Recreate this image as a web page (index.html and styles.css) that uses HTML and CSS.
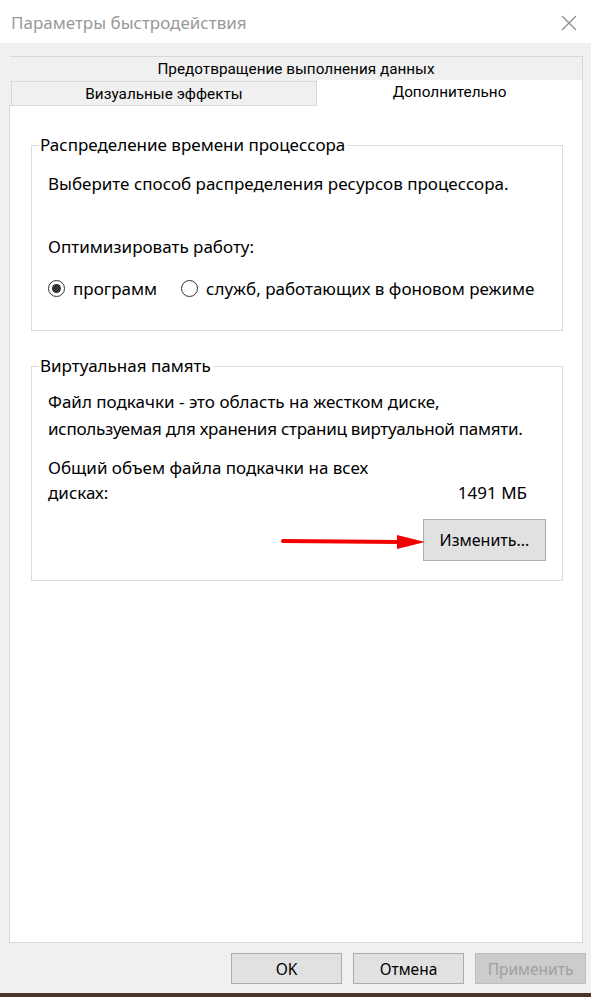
FILE: index.html
```html
<!DOCTYPE html>
<html lang="ru">
<head>
    <meta charset="UTF-8">
    <title>Параметры быстродействия</title>
    <link rel="stylesheet" href="styles.css">
</head>
<body>

<div class="window">
    <header class="titlebar">
        <span class="title">Параметры быстродействия</span>
        <svg class="close" width="16" height="16" viewBox="0 0 16 16">
            <path d="M1 1 L15 15 M15 1 L1 15" stroke="#8a8a8a" stroke-width="1.2" fill="none"/>
        </svg>
    </header>

    <main class="dialog">
        <div class="tabs">
            <div class="tab-row back">
                <div class="tab wide">Предотвращение выполнения данных</div>
            </div>
            <div class="tab-row front">
                <div class="tab">Визуальные эффекты</div>
                <div class="tab active">Дополнительно</div>
            </div>
        </div>

        <div class="panel">
            <fieldset class="group cpu">
                <legend>Распределение времени процессора</legend>
                <p class="line">Выберите способ распределения ресурсов процессора.</p>
                <p class="line optimize">Оптимизировать работу:</p>
                <div class="radios">
                    <label class="radio"><span class="dot checked"></span>программ</label>
                    <label class="radio"><span class="dot"></span>служб, работающих в фоновом режиме</label>
                </div>
            </fieldset>

            <fieldset class="group memory">
                <legend>Виртуальная память</legend>
                <p class="line">Файл подкачки - это область на жестком диске,<br><span class="tight">используемая для хранения страниц виртуальной памяти.</span></p>
                <div class="total">
                    <span>Общий объем файла подкачки на всех<br>дисках:</span>
                    <span class="size">1491 МБ</span>
                </div>
                <div class="change-row">
                    <button class="btn change">Изменить...</button>
                </div>
                <svg class="arrow" width="146" height="20" viewBox="0 0 146 20">
                    <path d="M2 9 L120 10" stroke="#f20000" stroke-width="4" stroke-linecap="round" fill="none"/>
                    <polygon points="116,3 144,10 116,17" fill="#f20000"/>
                </svg>
            </fieldset>
        </div>

        <div class="actions">
            <button class="btn">OK</button>
            <button class="btn">Отмена</button>
            <button class="btn" disabled>Применить</button>
        </div>
    </main>

    <div class="desktop"></div>
</div>

</body>
</html>
```

FILE: styles.css
```css
html, body {
    margin: 0;
    padding: 0;
}

body {
    font-family: "Noto Sans", sans-serif;
    font-size: 17px;
    color: #000;
    background: #f0f0f0;
}

.window {
    width: 591px;
    height: 997px;
    display: flex;
    flex-direction: column;
}

.titlebar {
    height: 43px;
    background: #fff;
    display: flex;
    align-items: center;
    justify-content: space-between;
    padding: 2px 14px 0 11px;
    box-sizing: border-box;
    flex: none;
}

.title {
    font-size: 17px;
    color: #999;
}

.close {
    margin-top: 1px;
}

.dialog {
    flex: 1;
    background: #f0f0f0;
    padding: 13px 8px 9px 9px;
    display: flex;
    flex-direction: column;
}

/* tabs */
.tabs {
    font-family: Roboto, sans-serif;
    font-size: 15.3px;
}

.tab-row {
    display: flex;
}

.tab-row.back {
    margin-left: 1px;
}

.tab-row.front {
    margin-left: 2px;
    align-items: flex-end;
}

.tab {
    background: #f0f0f0;
    border: 1px solid #d9d9d9;
    border-bottom: none;
    text-align: center;
    height: 23px;
    line-height: 24px;
}

.tab.wide {
    flex: 1;
    border-left: none;
}

.front .tab {
    width: 304px;
    border-top: none;
}

.front .tab.active {
    flex: 1;
    background: #fff;
    height: 26px;
    line-height: 24px;
    border-left: 1px solid #d9d9d9;
    margin-bottom: -1px;
    position: relative;
    z-index: 1;
}

.front .tab:first-child {
    border-right: none;
    border-top: 1px solid #d9d9d9;
}

.panel {
    flex: 1;
    background: #fff;
    border: 1px solid #d9d9d9;
    padding: 28px 19px 0 21px;
}

/* group boxes */
.group {
    position: relative;
    margin: 0;
    border: 1px solid #dcdcdc;
    padding: 0 16px 0 16px;
    min-width: 0;
}

.group legend {
    margin-left: -9px;
    padding: 0 2px 0 1px;
    line-height: 22px;
}

.line {
    margin: 0;
    line-height: 27px;
}

.cpu .line:first-of-type {
    margin-top: 14px;
}

.cpu .optimize {
    margin-top: 36px;
}

.radios {
    display: flex;
    gap: 24px;
    margin-top: 15px;
    margin-bottom: 28px;
}

.radio {
    display: flex;
    align-items: center;
    gap: 8px;
    line-height: 27px;
}

.dot {
    width: 17px;
    height: 17px;
    border: 1px solid #333;
    border-radius: 50%;
    box-sizing: border-box;
    display: inline-flex;
    align-items: center;
    justify-content: center;
}

.dot.checked::after {
    content: "";
    width: 9px;
    height: 9px;
    border-radius: 50%;
    background: #333;
}

.memory {
    margin-top: 24px;
    padding-bottom: 19px;
}

.memory .line {
    margin-top: 11px;
}

.tight {
    letter-spacing: -0.25px;
}

.total {
    display: flex;
    justify-content: space-between;
    align-items: flex-end;
    margin-top: 13px;
    line-height: 25px;
    padding-right: 19px;
}

.change-row {
    display: flex;
    justify-content: flex-end;
    margin-top: 14px;
}

.arrow {
    position: absolute;
    left: 249px;
    bottom: 28px;
}

/* buttons */
.btn {
    font-family: "Noto Sans", sans-serif;
    font-size: 15.5px;
    color: #000;
    background: #e1e1e1;
    border: 1px solid #adadad;
    width: 111px;
    height: 31px;
    padding: 0;
}

.btn.change {
    width: 123px;
    height: 42px;
    font-size: 16px;
}

.btn:disabled {
    background: #cccccc;
    border-color: #bfbfbf;
    color: #a0a0a0;
}

.actions {
    display: flex;
    justify-content: flex-end;
    gap: 11px;
    margin-top: 10px;
    margin-right: -3px;
}

.desktop {
    height: 4px;
    flex: none;
    background: #4a3526;
}
```
